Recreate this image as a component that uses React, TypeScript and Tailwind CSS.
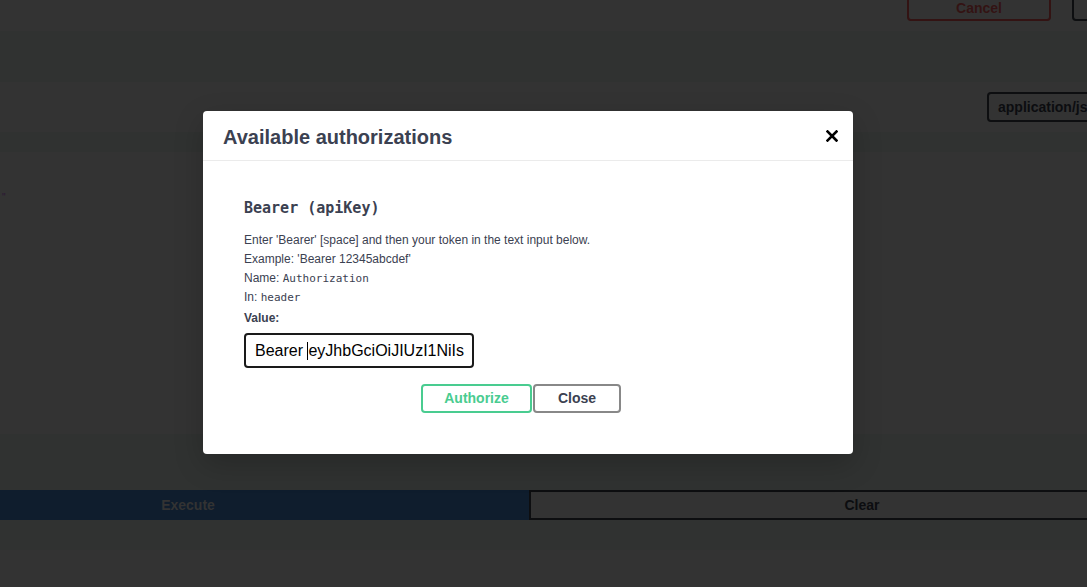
function CloseIcon() {
  return (
    <svg width="12" height="12" viewBox="0 0 12 12" className="block">
      <path d="M1.5 1.5 L10.5 10.5 M10.5 1.5 L1.5 10.5" stroke="#000" strokeWidth="2.6" strokeLinecap="square" />
    </svg>
  );
}

function AuthModal() {
  return (
    <div className="absolute left-[203px] top-[111px] w-[650px] rounded-[4px] bg-white shadow-[0_10px_30px_0_rgba(0,0,0,0.2)] font-['Liberation_Sans',Arial,sans-serif] text-[#3b4151]">
      <div className="flex h-[50px] items-center justify-between border-b border-[#ebebeb] pl-[20px] pr-[11px]">
        <h3 className="mt-[2px] text-[20px] font-bold leading-none">Available authorizations</h3>
        <button className="flex h-[20px] w-[20px] items-center justify-center">
          <CloseIcon />
        </button>
      </div>

      <div className="px-[41px] pt-[37px] pb-[41px]">
        <h4 className="font-['DejaVu_Sans_Mono',monospace] text-[15px] font-bold leading-[20px]">Bearer (apiKey)</h4>
        <div className="mt-[13px] text-[12px] leading-[19px]">
          <p>Enter 'Bearer' [space] and then your token in the text input below.</p>
          <p>Example: 'Bearer 12345abcdef'</p>
          <p>
            Name: <code className="font-['DejaVu_Sans_Mono',monospace] text-[11px]">Authorization</code>
          </p>
          <p>
            In: <code className="font-['DejaVu_Sans_Mono',monospace] text-[11px]">header</code>
          </p>
          <label className="mt-[2px] block font-bold">Value:</label>
        </div>
        <div className="mt-[5px] flex h-[35px] w-[230px] items-center overflow-hidden whitespace-nowrap rounded-[4px] border-2 border-[#1a1a1a] pl-[9px] text-[16px] text-black">
          <span>Bearer&nbsp;</span>
          <span className="h-[18px] w-px bg-black" />
          <span>eyJhbGciOiJIUzI1NiIs</span>
        </div>
        <div className="mt-[16px] flex justify-center gap-px pr-[14px]">
          <button className="h-[29px] w-[111px] rounded-[4px] border-2 border-[#49cc90] text-[14px] font-bold text-[#49cc90]">
            Authorize
          </button>
          <button className="h-[29px] w-[88px] rounded-[4px] border-2 border-[#888] text-[14px] font-bold text-[#3b4151]">
            Close
          </button>
        </div>
      </div>
    </div>
  );
}

export default function App() {
  return (
    <div className="relative h-[587px] w-[1087px] overflow-hidden bg-[#333] font-['Liberation_Sans',Arial,sans-serif]">
      <div className="flex h-full flex-col">
        <div className="flex h-[31px] shrink-0 items-start justify-end gap-[21px] bg-[#333]">
          <button className="-mt-[10px] h-[31px] w-[144px] rounded-[4px] border-2 border-[#331313] pt-[4px] text-[14px] font-bold leading-none text-[#331313]">
            Cancel
          </button>
          <div className="-mt-[10px] -mr-[40px] h-[31px] w-[55px] rounded-[4px] border-2 border-[#0d0e10]" />
        </div>
        <div className="h-[51px] shrink-0 bg-[#303231]" />
        <div className="flex h-[50px] shrink-0 justify-end bg-[#333] pt-[10px]">
          <div className="-mr-[30px] flex h-[30px] w-[130px] items-center rounded-[4px] border-2 border-[#0d0e10] pl-[9px] text-[14px] font-bold text-[#0c0d10]">
            application/json
          </div>
        </div>
        <div className="h-[20px] shrink-0 bg-[#303231]" />
        <div className="h-[282px] shrink-0 bg-[#333] pt-[32px] pl-[2px]">
          <span className="text-[10px] leading-none text-[#2a1533]">"</span>
        </div>
        <div className="h-[56px] shrink-0 bg-[#303231]" />
        <div className="flex h-[30px] shrink-0">
          <button className="flex w-[529px] shrink-0 items-center justify-center bg-[#0f1d2d] pr-[153px] text-[14px] font-bold text-[#333]">
            Execute
          </button>
          <button className="flex w-[666px] shrink-0 items-center justify-center border-2 border-[#0d0e10] text-[14px] font-bold text-[#0c0d10]">
            Clear
          </button>
        </div>
        <div className="h-[30px] shrink-0 bg-[#303231]" />
        <div className="flex-1 bg-[#333]" />
      </div>
      <AuthModal />
    </div>
  );
}
